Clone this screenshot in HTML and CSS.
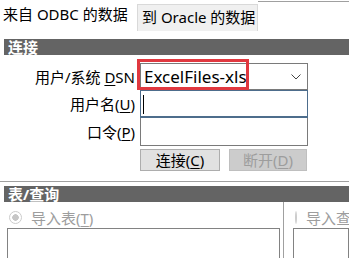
FILE: index.html
```html
<!DOCTYPE html>
<html>
<head>
  <meta charset="utf-8"/>
  <title>ODBC 数据</title>
  <link rel="stylesheet" href="styles.css">
</head>
<body>
  <!-- tab strip -->
  <div class="tabs">
    <div class="tab active">来自 ODBC 的数据</div>
    <div class="tab">到 Oracle 的数据</div>
    <div class="tab-rest"></div>
  </div>

  <!-- connection section -->
  <div class="bar bar-connect">连接</div>
  <div class="form">
    <label class="lbl">用户/系统 <u>D</u>SN</label>
    <div class="select">
      <span>ExcelFiles-xls</span>
      <svg class="caret" width="10" height="6" viewBox="0 0 10 6"><path d="M0.5 0.5 L5 5 L9.5 0.5" fill="none" stroke="#444" stroke-width="1"/></svg>
      <div class="mark"></div>
    </div>
    <label class="lbl">用户名(<u>U</u>)</label>
    <div class="input focus"><span class="caretline"></span></div>
    <label class="lbl">口令(<u>P</u>)</label>
    <div class="input"></div>
    <div></div>
    <div class="buttons">
      <button class="button">连接(<u>C</u>)</button>
      <button class="button disabled">断开(<u>D</u>)</button>
    </div>
  </div>

  <div class="rule"></div>

  <!-- table / query section -->
  <div class="bar bar-table">表/查询</div>
  <div class="tables">
    <div class="col col-left">
      <div class="radio-row"><span class="radio"></span><span>导入表(<u>T</u>)</span></div>
      <div class="listbox"></div>
    </div>
    <div class="divider"></div>
    <div class="col col-right">
      <div class="radio-row"><span class="radio empty"></span><span>导入查询(<u>Q</u>)</span></div>
      <div class="listbox"></div>
    </div>
  </div>
</body>
</html>
```

FILE: styles.css
```css
html, body {
  overflow: hidden;
}
body {
  margin: 0;
  width: 349px;
  height: 258px;
  background: #fff;
  font-family: "Noto Sans", "Noto Sans CJK SC", sans-serif;
  font-size: 15px;
  color: #000;
}
u {
  text-decoration: underline;
  text-underline-offset: 2px;
}

/* tabs */
.tabs {
  display: flex;
  height: 31px;
}
.tab {
  box-sizing: border-box;
  height: 31px;
  padding: 0 3px;
  line-height: 28px;
  white-space: nowrap;
}
.tab.active {
  width: 137px;
  background: #fff;
}
.tab:not(.active) {
  width: 121px;
  margin-top: 4px;
  height: 27px;
  line-height: 25px;
  padding-left: 4px;
  background: #f0f0f0;
  border: 1px solid #d9d9d9;
  border-bottom: none;
}
.tab-rest {
  flex: 1;
  border-top: 1px solid #a0a0a0;
  margin-top: 1px;
  background: #fff;
}

/* section bars */
.bar {
  margin-left: 4px;
  height: 16px;
  line-height: 16px;
  padding-left: 4px;
  background: #646464;
  color: #fff;
  font-weight: bold;
}
.bar-connect {
  margin-top: 8px;
}

/* connection form */
.form {
  display: grid;
  grid-template-columns: 140px 168px;
  grid-template-rows: 27px 28px 28px 28px;
  margin-top: 8px;
  align-items: center;
}
.lbl {
  text-align: right;
  padding-right: 5px;
  white-space: nowrap;
  line-height: 20px;
}
.select {
  position: relative;
  box-sizing: border-box;
  height: 27px;
  border: 1px solid #7a7a7a;
  display: flex;
  align-items: center;
  justify-content: space-between;
  padding: 0 6px 0 3px;
  font-size: 17px;
}
.mark {
  position: absolute;
  left: -4px;
  top: -5px;
  width: 106px;
  height: 25px;
  border: 3px solid #e0383f;
}
.input {
  box-sizing: border-box;
  height: 28px;
  border: 1px solid #7a7a7a;
  border-top: none;
  position: relative;
}
.input.focus {
  border: 1px solid #4d6d8c;
  border-bottom: 2px solid #4d6d8c;
}
.caretline {
  position: absolute;
  left: 2px;
  top: 4px;
  width: 1px;
  height: 19px;
  background: #000;
}
.buttons {
  display: flex;
  gap: 9px;
  align-self: end;
  height: 22px;
  margin-bottom: 3px;
}
.button {
  box-sizing: border-box;
  width: 80px;
  height: 22px;
  padding: 0;
  border: 1px solid #adadad;
  background: #e1e1e1;
  font-family: inherit;
  font-size: 15px;
  line-height: 18px;
  color: #000;
}
.button.disabled {
  width: 78px;
  background: #cccccc;
  border-color: #bfbfbf;
  color: #9d9d9d;
}

.rule {
  margin-top: 7px;
  height: 1px;
  background: #a0a0a0;
}
.bar-table {
  margin-top: 4px;
}

/* tables / queries */
.tables {
  display: flex;
  height: 56px;
}
.col {
  padding-top: 5px;
}
.col-left {
  width: 283px;
  padding-left: 7px;
  box-sizing: border-box;
  padding-right: 3px;
}
.col-right {
  flex: 1;
  padding-left: 9px;
  white-space: nowrap;
  overflow: hidden;
}
.divider {
  width: 1px;
  background: #a0a0a0;
}
.radio-row {
  display: flex;
  align-items: center;
  gap: 9px;
  height: 20px;
  color: #9d9d9d;
  padding-left: 2px;
}
.radio {
  box-sizing: border-box;
  width: 13px;
  height: 13px;
  border-radius: 50%;
  border: 1px solid #cccccc;
  background: radial-gradient(circle, #c6c6c6 0 3px, #fff 3.5px);
}
.radio.empty {
  background: #fff;
}
.listbox {
  box-sizing: border-box;
  margin-top: 1px;
  height: 30px;
  border: 1px solid #828282;
  border-bottom: none;
}
```
